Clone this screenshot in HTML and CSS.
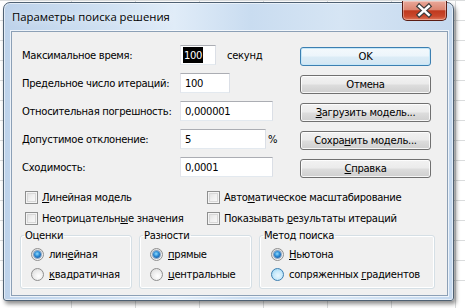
FILE: index.html
```html
<!DOCTYPE html>
<html lang="ru">
<head>
<meta charset="utf-8">
<title>Параметры поиска решения</title>
<link rel="stylesheet" href="styles.css">
</head>
<body>
<div class="window">
  <div class="titlebar">
    <span class="title">Параметры поиска решения</span>
    <span class="close">
      <svg width="45" height="20" viewBox="0 0 45 20">
        <path d="M17 5 L27 14 M27 5 L17 14" stroke="#3b3b3b" stroke-width="5" stroke-linecap="square"/>
        <path d="M17 5 L27 14 M27 5 L17 14" stroke="#ffffff" stroke-width="2.6" stroke-linecap="square"/>
      </svg>
    </span>
  </div>
  <div class="client">
    <div class="top">
      <div class="form">
        <div class="row">
          <span class="lbl">Максимальное время:</span>
          <span class="field w1"><span class="sel">100</span></span>
          <span class="unit">секунд</span>
        </div>
        <div class="row">
          <span class="lbl">Предельное число итераций:</span>
          <span class="field w2">100</span>
        </div>
        <div class="row">
          <span class="lbl">Относительная погрешность:</span>
          <span class="field w3">0,000001</span>
        </div>
        <div class="row">
          <span class="lbl">Допустимое отклонение:</span>
          <span class="field w4">5</span>
          <span class="pct">%</span>
        </div>
        <div class="row">
          <span class="lbl">Сходимость:</span>
          <span class="field w3">0,0001</span>
        </div>
      </div>
      <div class="buttons">
        <span class="btn default">OK</span>
        <span class="btn">Отмена</span>
        <span class="btn"><span><u>З</u>агрузить модель...</span></span>
        <span class="btn"><span>Сохра<u>н</u>ить модель...</span></span>
        <span class="btn"><span><u>С</u>правка</span></span>
      </div>
    </div>
    <div class="checks">
      <span class="check"><span class="box"></span><span><u>Л</u>инейная модель</span></span>
      <span class="check"><span class="box"></span><span>Авто<u>м</u>атическое масштабирование</span></span>
      <span class="check"><span class="box"></span><span>Неотрицательн<u>ы</u>е значения</span></span>
      <span class="check"><span class="box"></span><span>Показывать <u>р</u>езультаты итераций</span></span>
    </div>
    <div class="groups">
      <fieldset class="group g1">
        <legend>Оценки</legend>
        <span class="radio"><span class="dot on"></span><span>лин<u>е</u>йная</span></span>
        <span class="radio"><span class="dot"></span><span><u>к</u>вадратичная</span></span>
      </fieldset>
      <fieldset class="group g2">
        <legend>Разности</legend>
        <span class="radio"><span class="dot on"></span><span><u>п</u>рямые</span></span>
        <span class="radio"><span class="dot"></span><span><u>ц</u>ентральные</span></span>
      </fieldset>
      <fieldset class="group g3">
        <legend>Метод поиска</legend>
        <span class="radio"><span class="dot on"></span><span><u>Н</u>ьютона</span></span>
        <span class="radio"><span class="dot hover"></span><span>сопряженных <u>г</u>радиентов</span></span>
      </fieldset>
    </div>
  </div>
</div>
</body>
</html>
```

FILE: styles.css
```css
* { box-sizing: border-box; }
html, body { margin: 0; padding: 0; }
body {
  width: 465px;
  height: 308px;
  overflow: hidden;
  background-color: #ffffff;
  background-image:
    repeating-linear-gradient(0deg, transparent 0 19px, #dadcdd 19px 20px),
    repeating-linear-gradient(90deg, transparent 0 63px, #dadcdd 63px 64px);
  background-position: 0 -8px, 8px 0;
  font-family: "DejaVu Sans", sans-serif;
  font-size: 10px;
  letter-spacing: -0.3px;
  color: #000;
  padding: 2px 0 0 3px;
}
.window {
  width: 451px;
  height: 299px;
  border: 1px solid #4f6173;
  border-radius: 7px 7px 3px 3px;
  background: linear-gradient(90deg, #bdd2ea 0%, #cfe0f2 22%, #e0ecf8 38%, #c9dcf0 55%, #d6e5f4 75%, #c4d8ee 100%);
  box-shadow: inset 0 0 0 1px rgba(255,255,255,0.55), 2px 3px 4px rgba(0,0,0,0.45);
  display: flex;
  flex-direction: column;
  padding: 0 6px 0 7px;
}
.titlebar {
  height: 28px;
  flex: none;
  display: flex;
  align-items: flex-start;
  justify-content: space-between;
}
.title {
  font-family: "Open Sans", sans-serif;
  font-size: 11.3px;
  letter-spacing: 0;
  color: #000;
  margin-top: 6px;
  margin-left: 1px;
  text-shadow: 0 0 8px rgba(255,255,255,0.9);
}
.close {
  width: 45px;
  height: 20px;
  margin-top: -2px;
  border: 1px solid #5a1d14;
  border-top: none;
  border-radius: 0 0 5px 5px;
  background: linear-gradient(180deg, #e9a899 0%, #dc8672 45%, #c0391e 52%, #c9482c 80%, #e0775a 100%);
  box-shadow: inset 0 0 0 1px rgba(255,255,255,0.35);
  display: flex;
}
.close svg { display: block; }
.client {
  flex: none;
  width: 437px;
  height: 265px;
  background: #f0f0f0;
  border: 1px solid #8ca0b6;
  box-shadow: 0 0 0 1px rgba(255,255,255,0.7);
  padding: 13px 0 0 0;
  display: flex;
  flex-direction: column;
}
.top {
  display: flex;
  height: 134px;
  flex: none;
}
.form {
  width: 288px;
  display: flex;
  flex-direction: column;
  gap: 8px;
  padding-left: 10px;
}
.row {
  display: flex;
  align-items: center;
  height: 20px;
}
.lbl {
  width: 158px;
  flex: none;
  white-space: nowrap;
}
.field {
  height: 20px;
  border: 1px solid #abadb3;
  border-color: #abadb3 #dbdfe6 #e3e9ef #e2e3ea;
  background: #fff;
  display: flex;
  align-items: center;
  padding-left: 4px;
  flex: none;
}
.w1 { width: 36px; padding-left: 2px; }
.w2 { width: 50px; }
.w3 { width: 93px; }
.w4 { width: 86px; }
.sel {
  background: #000;
  color: #fff;
  height: 16px;
  display: flex;
  align-items: center;
  padding: 0 1px;
}
.unit { margin-left: 11px; }
.pct { margin-left: 2px; }
.buttons {
  display: flex;
  flex-direction: column;
  gap: 9px;
  padding-top: 2px;
}
.btn {
  width: 131px;
  height: 19px;
  border: 1px solid #707070;
  border-radius: 3px;
  background: linear-gradient(180deg, #f2f2f2 0%, #ebebeb 48%, #dddddd 52%, #cfcfcf 100%);
  box-shadow: inset 0 0 0 1px rgba(255,255,255,0.8);
  display: flex;
  align-items: center;
  justify-content: center;
  white-space: nowrap;
}
.btn.default {
  border-color: #3c7fb1;
  background: linear-gradient(180deg, #f4f9fc 0%, #ecf5fb 48%, #dcecf6 52%, #d3e6f3 100%);
  box-shadow: inset 0 0 0 1px #c5e7f8;
}
.checks {
  display: grid;
  grid-template-columns: 182px auto;
  grid-auto-rows: 21px;
  padding-left: 13px;
  margin-top: 8px;
  flex: none;
}
.check {
  display: flex;
  align-items: center;
  white-space: nowrap;
}
.box {
  width: 13px;
  height: 13px;
  border: 1px solid #8e8f8f;
  background: linear-gradient(135deg, #dcdcdc 0%, #f0f0f0 50%, #fcfcfc 100%);
  box-shadow: inset 0 0 0 1px #f4f4f4, inset 0 0 0 2px #d8d8d8;
  margin-right: 4px;
  flex: none;
}
.groups {
  display: flex;
  gap: 7px;
  padding-left: 8px;
  margin-top: 0px;
  flex: none;
}
.group {
  margin: 0;
  padding: 3px 0 4px 2px;
  border: 1px solid #d5dfe5;
  border-radius: 3px;
  box-shadow: inset 0 0 0 1px #fff;
  height: 60px;
  display: flex;
  flex-direction: column;
}
.group legend {
  padding: 0 1px;
  line-height: 13px;
  margin-left: 1px;
}
.g1 { width: 112px; }
.g2 { width: 113px; }
.g3 { width: 176px; }
.radio {
  display: flex;
  align-items: center;
  height: 23px;
  padding-left: 8px;
  white-space: nowrap;
}
.g3 .radio { padding-left: 9px; }
.dot {
  width: 13px;
  height: 13px;
  border-radius: 50%;
  border: 1px solid #8f8f8f;
  background: radial-gradient(circle at 60% 65%, #ffffff 0%, #f0f0f0 40%, #d6d6d6 100%);
  margin-right: 5px;
  flex: none;
  display: flex;
  align-items: center;
  justify-content: center;
}
.dot.on::after {
  content: "";
  width: 7px;
  height: 7px;
  border-radius: 50%;
  background: radial-gradient(circle at 45% 40%, #8fdcff 0%, #2a8ad4 45%, #0f3e82 100%);
  box-shadow: 0 0 0 1px rgba(40,90,150,0.5);
}
.dot.hover {
  border-color: #3c7fb1;
  background: radial-gradient(circle at 55% 60%, #e9f7fe 0%, #c9eafb 45%, #8ed0f2 100%);
}
u { text-decoration: underline; text-underline-offset: 1px; }
```
